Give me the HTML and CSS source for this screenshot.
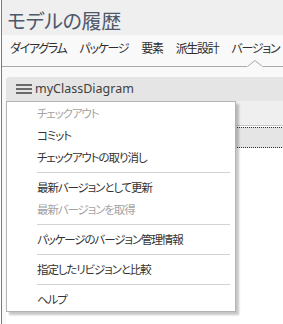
FILE: index.html
```html
<!DOCTYPE html>
<html lang="ja">
<head>
<meta charset="utf-8">
<link rel="stylesheet" href="styles.css">
</head>
<body>
<div class="window">
  <div class="title">モデルの履歴</div>
  <div class="tabs">
    <span class="tab">ダイアグラム</span>
    <span class="tab">パッケージ</span>
    <span class="tab">要素</span>
    <span class="tab">派生設計</span>
    <span class="tab active">バージョン<svg class="notch" width="16" height="7" viewBox="0 0 16 7"><rect x="0" y="6" width="16" height="1" fill="#f9f9f9"/><path d="M0.5 6.5 L8 0.5 L15.5 6.5" fill="#f9f9f9" stroke="#a9a9a9" stroke-width="1"/></svg></span>
  </div>
  <div class="body">
    <div class="panel">
      <div class="panel-head">
        <svg class="burger" width="16" height="10" viewBox="0 0 16 10"><rect x="0" y="0" width="16" height="2" fill="#6a6a6a"/><rect x="0" y="4" width="16" height="2" fill="#6a6a6a"/><rect x="0" y="8" width="16" height="2" fill="#6a6a6a"/></svg>
        <span class="panel-name">myClassDiagram</span>
      </div>
      <div class="toolbar"></div>
      <div class="list">
        <div class="row selected"></div>
      </div>
      <div class="menu">
        <div class="item disabled">チェックアウト</div>
        <div class="item">コミット</div>
        <div class="item">チェックアウトの取り消し</div>
        <div class="sep"></div>
        <div class="item">最新バージョンとして更新</div>
        <div class="item disabled">最新バージョンを取得</div>
        <div class="sep"></div>
        <div class="item">パッケージのバージョン管理情報</div>
        <div class="sep"></div>
        <div class="item">指定したリビジョンと比較</div>
        <div class="sep"></div>
        <div class="item">ヘルプ</div>
      </div>
    </div>
  </div>
</div>
</body>
</html>
```
FILE: styles.css
```css
html, body {
  margin: 0;
  padding: 0;
  background: #ffffff;
}
body {
  font-family: "Noto Sans CJK JP", "Noto Sans", sans-serif;
  font-feature-settings: "palt";
  color: #333333;
}
.window {
  width: 282px;
  height: 324px;
  margin-left: 1px;
  border-left: 1px solid #5f7db0;
  background: #ffffff;
  overflow: hidden;
}
.title {
  height: 28px;
  padding-top: 7px;
  padding-left: 5px;
  font-size: 20px;
  line-height: 28px;
  letter-spacing: -0.3px;
  color: #4e586b;
  background: #efefef;
}
.tabs {
  display: flex;
  gap: 13px;
  height: 31px;
  padding-left: 8px;
  background: #f9f9f9;
  border-bottom: 1px solid #a9a9a9;
  font-size: 12px;
  line-height: 25px;
  letter-spacing: -1.3px;
  white-space: nowrap;
}
.tab {
  position: relative;
  color: #2e2e2e;
}
.notch {
  position: absolute;
  left: 50%;
  bottom: -1px;
  margin-left: -8px;
  display: block;
}
.body {
  background: #f9f9f9;
  padding-top: 10px;
  padding-left: 4px;
  height: 260px;
}
.panel {
  position: relative;
  background: #ffffff;
  height: 260px;
}
.panel-head {
  display: flex;
  align-items: center;
  height: 24px;
  padding-left: 10px;
  gap: 3px;
  background: #e5e5e5;
  border-top-left-radius: 3px;
}
.burger {
  display: block;
}
.panel-name {
  font-family: "Noto Sans", "Liberation Sans", sans-serif;
  font-size: 12.5px;
  color: #404040;
  line-height: 24px;
}
.toolbar {
  height: 24px;
  background: #efefef;
  border-bottom: 1px solid #c6c6c6;
}
.list {
  padding-top: 1px;
}
.row {
  height: 19px;
}
.row.selected {
  background: #e5e5e5;
  border-top: 1px dotted #333333;
  border-bottom: 1px dotted #333333;
  border-left: 1px dotted #333333;
}
.menu {
  position: absolute;
  left: 0;
  top: 24px;
  width: 228px;
  padding-bottom: 1px;
  background: #ffffff;
  border: 1px solid #b3b3b3;
  box-shadow: 3px 3px 2px rgba(0, 0, 0, 0.22);
  font-size: 11.5px;
  letter-spacing: -1.1px;
}
.item {
  height: 22px;
  line-height: 22px;
  padding-left: 30px;
  color: #333333;
  white-space: nowrap;
}
.item.disabled {
  color: #a3a3a3;
}
.sep {
  height: 1px;
  margin: 4px 5px 3px 30px;
  background: #d3d3d3;
}
```
